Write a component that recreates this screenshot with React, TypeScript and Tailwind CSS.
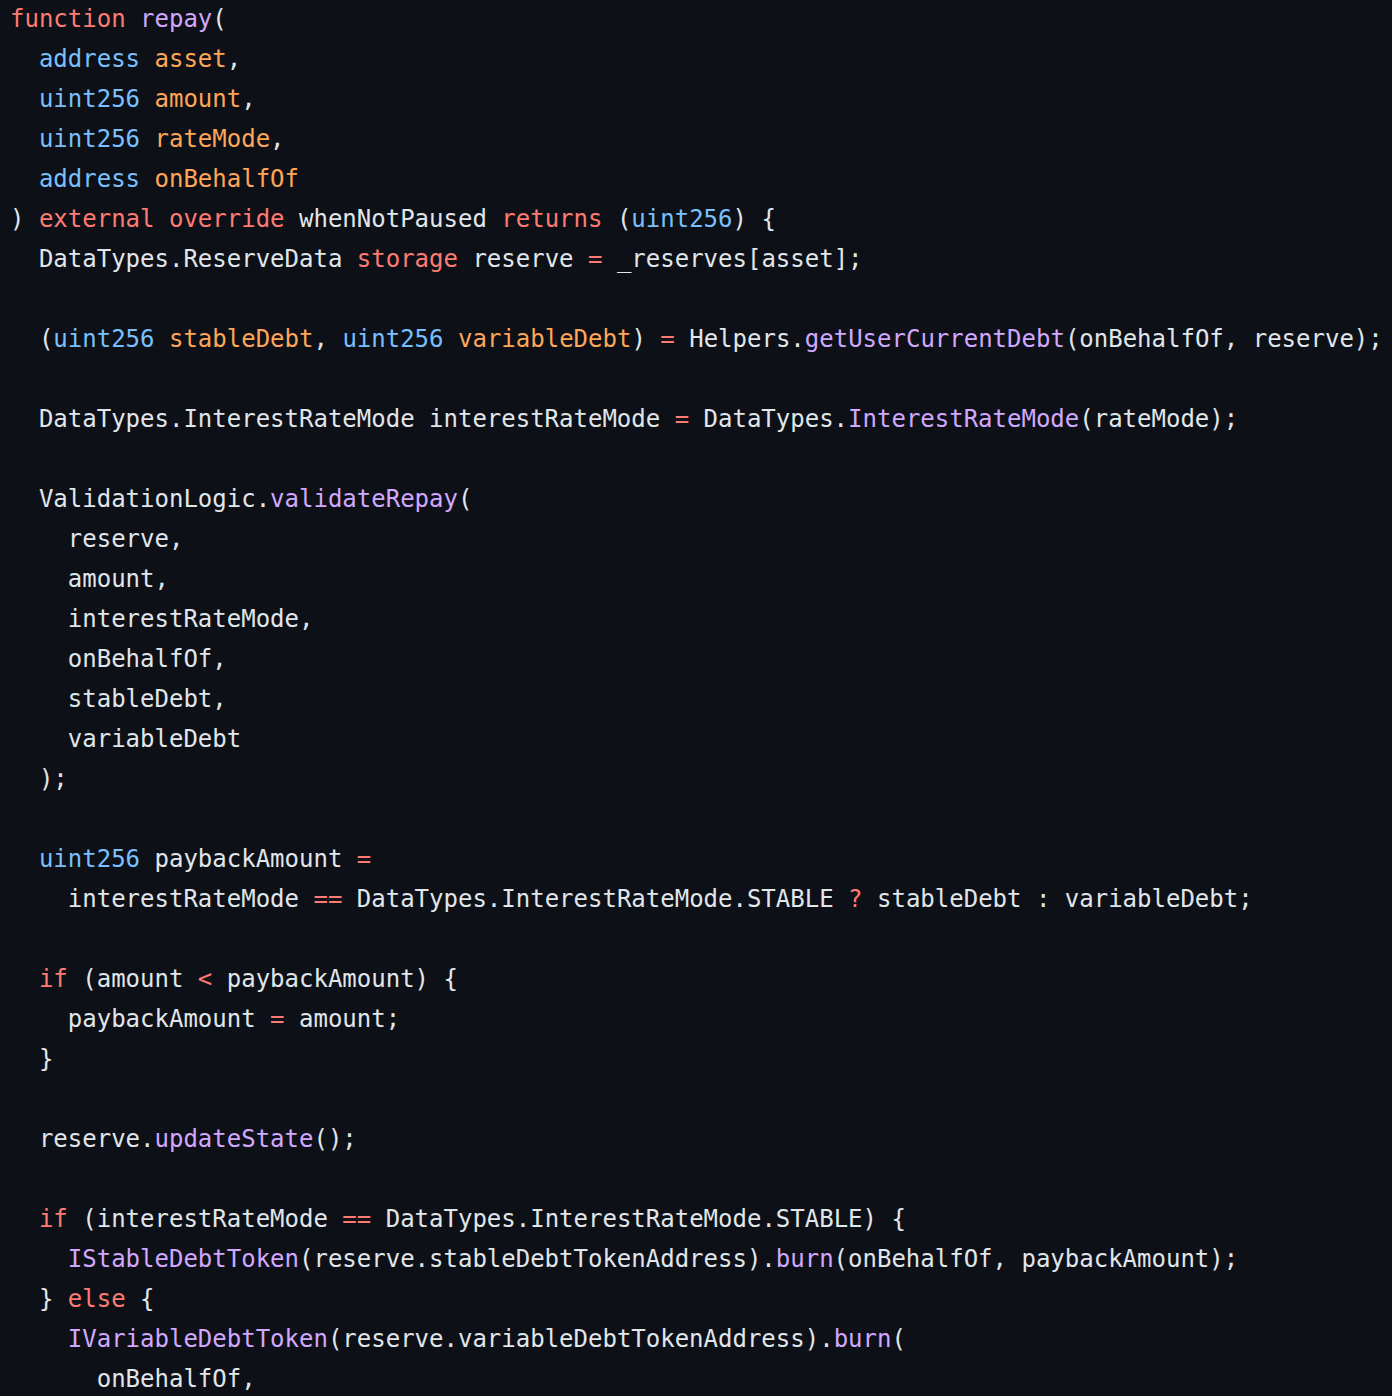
import React from "react";

type Tok = [string, string?];

const K = "text-[#ff7b72]";
const F = "text-[#d2a8ff]";
const T = "text-[#79c0ff]";
const V = "text-[#ffa657]";

const lines: Tok[][] = [
  [["function", K], [" "], ["repay", F], ["("]],
  [["  "], ["address", T], [" "], ["asset", V], [","]],
  [["  "], ["uint256", T], [" "], ["amount", V], [","]],
  [["  "], ["uint256", T], [" "], ["rateMode", V], [","]],
  [["  "], ["address", T], [" "], ["onBehalfOf", V]],
  [[") "], ["external", K], [" "], ["override", K], [" whenNotPaused "], ["returns", K], [" ("], ["uint256", T], [") {"]],
  [["  DataTypes.ReserveData "], ["storage", K], [" reserve "], ["=", K], [" _reserves[asset];"]],
  [],
  [["  ("], ["uint256", T], [" "], ["stableDebt", V], [", "], ["uint256", T], [" "], ["variableDebt", V], [") "], ["=", K], [" Helpers."], ["getUserCurrentDebt", F], ["(onBehalfOf, reserve);"]],
  [],
  [["  DataTypes.InterestRateMode interestRateMode "], ["=", K], [" DataTypes."], ["InterestRateMode", F], ["(rateMode);"]],
  [],
  [["  ValidationLogic."], ["validateRepay", F], ["("]],
  [["    reserve,"]],
  [["    amount,"]],
  [["    interestRateMode,"]],
  [["    onBehalfOf,"]],
  [["    stableDebt,"]],
  [["    variableDebt"]],
  [["  );"]],
  [],
  [["  "], ["uint256", T], [" paybackAmount "], ["=", K]],
  [["    interestRateMode "], ["==", K], [" DataTypes.InterestRateMode.STABLE "], ["?", K], [" stableDebt : variableDebt;"]],
  [],
  [["  "], ["if", K], [" (amount "], ["<", K], [" paybackAmount) {"]],
  [["    paybackAmount "], ["=", K], [" amount;"]],
  [["  }"]],
  [],
  [["  reserve."], ["updateState", F], ["();"]],
  [],
  [["  "], ["if", K], [" (interestRateMode "], ["==", K], [" DataTypes.InterestRateMode.STABLE) {"]],
  [["    "], ["IStableDebtToken", F], ["(reserve.stableDebtTokenAddress)."], ["burn", F], ["(onBehalfOf, paybackAmount);"]],
  [["  } "], ["else", K], [" {"]],
  [["    "], ["IVariableDebtToken", F], ["(reserve.variableDebtTokenAddress)."], ["burn", F], ["("]],
  [["      onBehalfOf,"]],
];

export default function App() {
  return (
    <div className="w-[1392px] h-[1396px] overflow-hidden bg-[#0d1117]">
      <pre
        className="m-0 -mt-[1px] pl-[10px] text-[24px] leading-[40px] text-[#e1e6eb] whitespace-pre"
        style={{ fontFamily: '"DejaVu Sans Mono", "Liberation Mono", monospace' }}
      >
        {lines.map((line, i) => (
          <div key={i} className="h-[40px]">
            {line.map(([text, cls], j) => (
              <span key={j} className={cls}>
                {text}
              </span>
            ))}
          </div>
        ))}
      </pre>
    </div>
  );
}
